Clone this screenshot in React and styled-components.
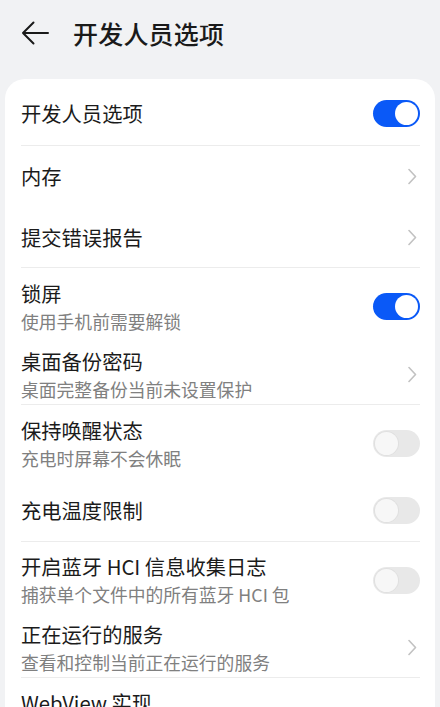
import React from 'react'
import styled, { createGlobalStyle } from 'styled-components'

const Global = createGlobalStyle`
  html, body {
    margin: 0;
    padding: 0;
    background: #f1f2f4;
    overflow: hidden;
  }
  body {
    font-family: "Noto Sans CJK SC", "Noto Sans", sans-serif;
  }
`

const Page = styled.div`
  width: 440px;
  min-height: 707px;
  background: #f1f2f4;
`

const Header = styled.div`
  height: 66px;
  display: flex;
  align-items: center;
  padding-left: 21px;
  gap: 23px;
`

const BackButton = styled.div`
  width: 29px;
  height: 24px;
  display: flex;
  align-items: center;
  color: #1a1a1a;
`

const Title = styled.h1`
  margin: 0;
  font-size: 25px;
  font-weight: 500;
  color: #1a1a1a;
  letter-spacing: 0.2px;
`

const Card = styled.div`
  margin: 13px 5px 0 5px;
  background: #fff;
  border-radius: 20px;
  padding: 2px 15px 0 16px;
`

const Row = styled.div`
  height: ${p => p.h}px;
  display: flex;
  align-items: center;
  justify-content: space-between;
  box-sizing: border-box;
  padding-top: ${p => p.pad || 0}px;
  border-bottom: ${p => (p.divider ? '1px solid #ececec' : 'none')};
`

const Texts = styled.div`
  display: flex;
  flex-direction: column;
`

const RowTitle = styled.div`
  font-size: 20.3px;
  line-height: 27px;
  font-weight: 400;
  color: #1b1b1b;
`

const RowSub = styled.div`
  font-size: 17.8px;
  line-height: 25px;
  margin-top: 2px;
  color: #808080;
`

const Track = styled.div`
  width: 47px;
  height: 27px;
  border-radius: 14px;
  background: ${p => (p.on ? '#0a59f7' : '#e8e8e8')};
  display: flex;
  align-items: center;
  justify-content: ${p => (p.on ? 'flex-end' : 'flex-start')};
  padding: 0 2px;
  box-sizing: border-box;
  flex-shrink: 0;
`

const Knob = styled.div`
  width: 23px;
  height: 23px;
  border-radius: 50%;
  background: ${p => (p.on ? '#ffffff' : '#f7f7f7')};
  box-shadow: ${p => (p.on ? 'none' : '0 0 0 1px #e0e0e0')};
`

const ChevronBox = styled.div`
  width: 12px;
  display: flex;
  justify-content: flex-end;
  margin-right: 3px;
  color: #c2c2c2;
`

const Toggle = ({ on }) => (
  <Track on={on}>
    <Knob on={on} />
  </Track>
)

const Chevron = () => (
  <ChevronBox>
    <svg width="9" height="17" viewBox="0 0 9 17" fill="none">
      <path d="M1 1.5 L7.5 8.5 L1 15.5" stroke="currentColor" strokeWidth="1.6" strokeLinecap="round" strokeLinejoin="round" />
    </svg>
  </ChevronBox>
)

const items = [
  { title: '开发人员选项', type: 'on', h: 65, divider: true },
  { title: '内存', type: 'arrow', h: 61 },
  { title: '提交错误报告', type: 'arrow', h: 61, divider: true },
  { title: '锁屏', sub: '使用手机前需要解锁', type: 'on', h: 69, pad: 8 },
  { title: '桌面备份密码', sub: '桌面完整备份当前未设置保护', type: 'arrow', h: 68, pad: 8, divider: true },
  { title: '保持唤醒状态', sub: '充电时屏幕不会休眠', type: 'off', h: 69, pad: 8 },
  { title: '充电温度限制', type: 'off', h: 68, pad: 6, divider: true },
  { title: '开启蓝牙 HCI 信息收集日志', sub: '捕获单个文件中的所有蓝牙 HCI 包', type: 'off', h: 68, pad: 8 },
  { title: '正在运行的服务', sub: '查看和控制当前正在运行的服务', type: 'arrow', h: 68, pad: 8, divider: true },
  { title: 'WebView 实现', sub: 'Android System WebView', type: 'arrow', h: 68, pad: 8 },
]

export default function App() {
  return (
    <Page>
      <Global />
      <Header>
        <BackButton>
          <svg width="28" height="24" viewBox="0 0 28 24" fill="none">
            <path d="M27 12 H2 M12.5 1.5 L2 12 L12.5 22.5" stroke="currentColor" strokeWidth="2" strokeLinecap="round" strokeLinejoin="round" />
          </svg>
        </BackButton>
        <Title>开发人员选项</Title>
      </Header>
      <Card>
        {items.map(it => (
          <Row key={it.title} h={it.h} pad={it.pad} divider={it.divider}>
            <Texts>
              <RowTitle>{it.title}</RowTitle>
              {it.sub && <RowSub>{it.sub}</RowSub>}
            </Texts>
            {it.type === 'arrow' ? <Chevron /> : <Toggle on={it.type === 'on'} />}
          </Row>
        ))}
      </Card>
    </Page>
  )
}
